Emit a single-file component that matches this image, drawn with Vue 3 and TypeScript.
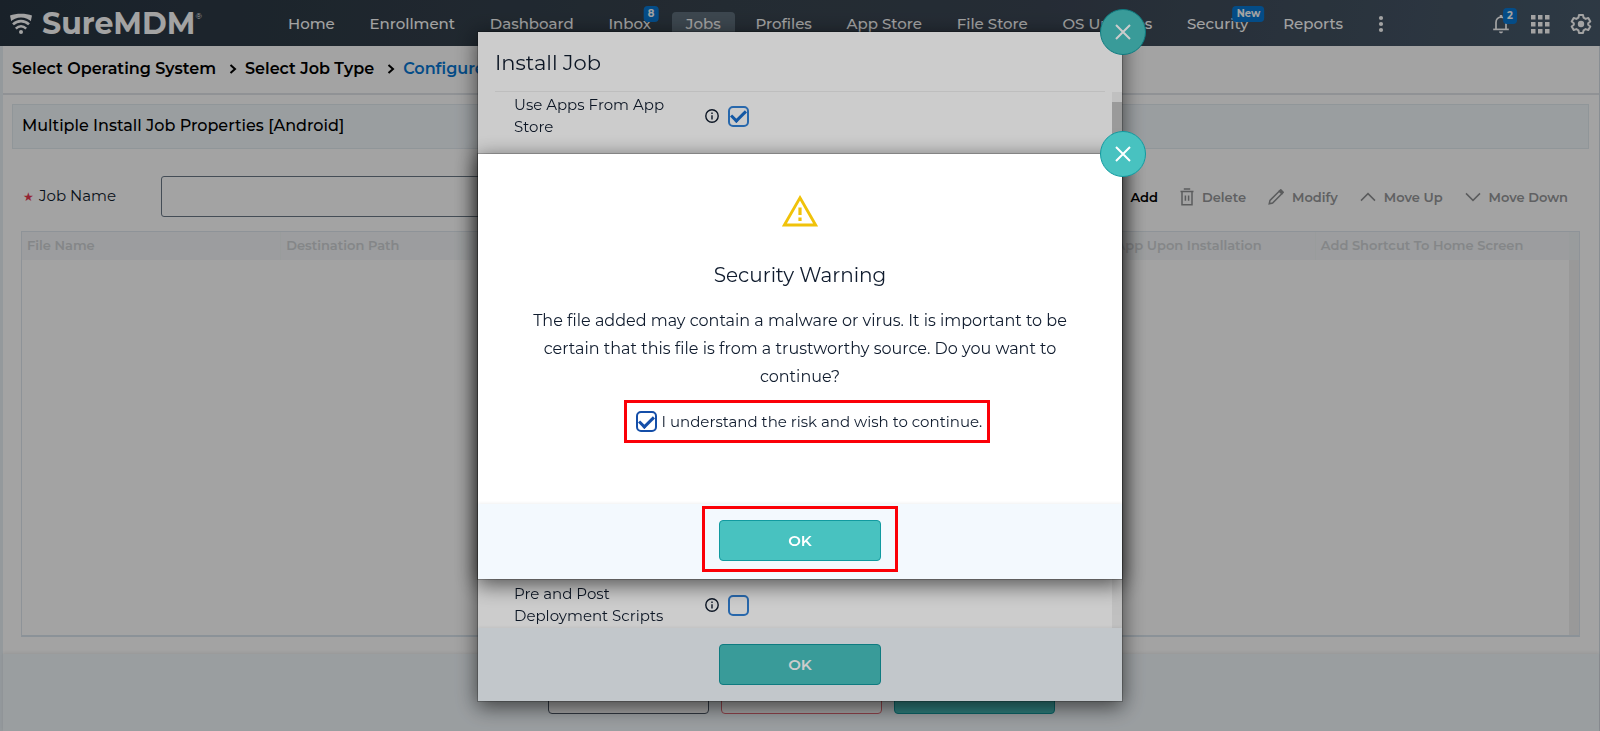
<script setup lang="ts">
import { ref } from 'vue'

interface NavItem {
  label: string
  badge?: string
  active?: boolean
}

const navItems: NavItem[] = [
  { label: 'Home' },
  { label: 'Enrollment' },
  { label: 'Dashboard' },
  { label: 'Inbox', badge: '8' },
  { label: 'Jobs', active: true },
  { label: 'Profiles' },
  { label: 'App Store' },
  { label: 'File Store' },
  { label: 'OS Updates' },
  { label: 'Security', badge: 'New' },
  { label: 'Reports' },
]

const columns: string[] = [
  'File Name',
  'Destination Path',
  '',
  '',
  'Launch App Upon Installation',
  'Add Shortcut To Home Screen',
]

const gridDots: number[] = [1, 8, 15]

const jobName = ref('')
const useAppStore = ref(true)
const deployScripts = ref(false)
const riskAccepted = ref(true)
</script>

<template>
  <div class="page">
    <header class="topbar">
      <a class="brand" href="#">
        <svg class="brand-mark" viewBox="0 0 22 22" aria-hidden="true">
          <path d="M0 2.6C6 0 16 0 22 2.6L20.8 8.2C19.4 6.8 18.2 6.2 17 5.7C13 4.2 9 4.2 5 5.7C3.8 6.2 2.6 6.8 1.2 8.2Z" fill="#fff" />
          <path d="M3 11.4C7.6 7 14.4 7 19 11.4" fill="none" stroke="#fff" stroke-width="2.6" />
          <path d="M5.8 15.6C9 12.4 13 12.4 16.2 15.6" fill="none" stroke="#fff" stroke-width="2.4" />
          <circle cx="11" cy="18.9" r="2" fill="#fff" />
        </svg>
        <span class="brand-name">SureMDM</span><sup class="brand-reg">®</sup>
      </a>
      <nav class="nav">
        <a
          v-for="item in navItems"
          :key="item.label"
          href="#"
          class="nav-link"
          :class="{ active: item.active }"
        >
          {{ item.label }}
          <span v-if="item.badge" class="badge">{{ item.badge }}</span>
        </a>
        <button class="icon-btn" type="button" aria-label="More">
          <svg width="6" height="18" viewBox="0 0 6 18">
            <circle cx="3" cy="3" r="2.1" /><circle cx="3" cy="9" r="2.1" /><circle cx="3" cy="15" r="2.1" />
          </svg>
        </button>
      </nav>
      <div class="tools">
        <button class="icon-btn" type="button" aria-label="Notifications">
          <svg width="18" height="20" viewBox="0 0 18 20">
            <path d="M4 15V8.6C4 5.4 6.2 3.2 9 3.2S14 5.4 14 8.6V15" fill="none" stroke="#fff" stroke-width="1.7" />
            <path d="M1.2 15.4H16.8" stroke="#fff" stroke-width="1.7" />
            <path d="M7.8 1H10.2V3.4H7.8ZM7 17.4H11C11 18.6 10.2 19.2 9 19.2S7 18.6 7 17.4Z" />
          </svg>
          <span class="badge">2</span>
        </button>
        <button class="icon-btn" type="button" aria-label="Apps">
          <svg width="20" height="20" viewBox="0 0 20 20">
            <template v-for="y in gridDots" :key="y">
              <rect v-for="x in gridDots" :key="x" :x="x" :y="y" width="4.5" height="4.5" />
            </template>
          </svg>
        </button>
        <button class="icon-btn" type="button" aria-label="Settings">
          <svg width="22" height="22" viewBox="0 0 22 22">
            <path
              d="M9 2H13L13.6 4.7L15.6 5.9L18.3 5L20.3 8.5L18.2 10.2V11.8L20.3 13.5L18.3 17L15.6 16.1L13.6 17.3L13 20H9L8.4 17.3L6.4 16.1L3.7 17L1.7 13.5L3.8 11.8V10.2L1.7 8.5L3.7 5L6.4 5.9L8.4 4.7Z"
              fill="none"
              stroke="#fff"
              stroke-width="2"
              stroke-linejoin="round"
            />
            <circle cx="11" cy="11" r="3.2" />
          </svg>
        </button>
      </div>
    </header>

    <main class="content">
      <ol class="crumbs">
        <li><a href="#">Select Operating System</a></li>
        <li>
          <svg class="crumb-sep" viewBox="0 0 8 10"><path d="M1.5 1L6 5L1.5 9" /></svg>
          <a href="#">Select Job Type</a>
        </li>
        <li>
          <svg class="crumb-sep" viewBox="0 0 8 10"><path d="M1.5 1L6 5L1.5 9" /></svg>
          <a href="#" class="current">Configure</a>
        </li>
      </ol>

      <h1 class="section-title">Multiple Install Job Properties [Android]</h1>

      <div class="form-row">
        <label class="field-label" for="job-name"><span class="req">★</span>Job Name</label>
        <input id="job-name" v-model="jobName" class="text-input" type="text" />
        <div class="actions">
          <button class="action enabled" type="button">Add</button>
          <button class="action" type="button" disabled>
            <svg width="14" height="18" viewBox="0 0 14 18">
              <path d="M0.5 3.6H13.5M3.8 1H10.2M2 3.6V16.8H12V3.6M5.4 7.4V12.8M8.6 7.4V12.8" />
            </svg>
            Delete
          </button>
          <button class="action" type="button" disabled>
            <svg width="16" height="16" viewBox="0 0 16 16">
              <path d="M1.2 14.8L2 11.4L11.2 2.2L13.8 4.8L4.6 14L1.2 14.8Z" />
              <path class="solid" d="M11.6 1.8L12.8 0.8L15.2 3.2L14.2 4.4Z" />
            </svg>
            Modify
          </button>
          <button class="action" type="button" disabled>
            <svg width="16" height="10" viewBox="0 0 16 10"><path d="M1 8.6L8 1.6L15 8.6" /></svg>
            Move Up
          </button>
          <button class="action" type="button" disabled>
            <svg width="16" height="10" viewBox="0 0 16 10"><path d="M1 1.4L8 8.4L15 1.4" /></svg>
            Move Down
          </button>
        </div>
      </div>

      <div class="table-box">
        <table class="files">
          <thead>
            <tr>
              <th v-for="(col, i) in columns" :key="i" scope="col">{{ col }}</th>
            </tr>
          </thead>
        </table>
        <div class="table-track"></div>
      </div>

      <footer class="page-footer">
        <button class="footer-btn plain" type="button" aria-label="Back"></button>
        <button class="footer-btn danger" type="button" aria-label="Cancel"></button>
        <button class="footer-btn primary" type="button" aria-label="Save"></button>
      </footer>
    </main>
  </div>

  <div class="backdrop install-layer">
    <section class="modal" role="dialog" aria-label="Install Job">
      <button class="close" type="button" aria-label="Close">
        <svg width="16" height="16" viewBox="0 0 16 16"><path d="M1 1L15 15M15 1L1 15" /></svg>
      </button>
      <h2 class="modal-title">Install Job</h2>
      <div class="install-scroll">
        <div class="install-body">
          <div class="option">
            <label for="use-apps">Use Apps From App Store</label>
            <svg class="info" viewBox="0 0 14 14">
              <circle cx="7" cy="7" r="6.2" /><path d="M7 6.2V10.4M7 3.6V5" />
            </svg>
            <input id="use-apps" v-model="useAppStore" class="tick" type="checkbox" />
          </div>
          <div class="option">
            <label for="scripts">Pre and Post Deployment Scripts</label>
            <svg class="info" viewBox="0 0 14 14">
              <circle cx="7" cy="7" r="6.2" /><path d="M7 6.2V10.4M7 3.6V5" />
            </svg>
            <input id="scripts" v-model="deployScripts" class="tick" type="checkbox" />
          </div>
        </div>
        <div class="scroll-track"><div class="scroll-thumb"></div></div>
      </div>
      <div class="modal-footer">
        <button class="ok" type="button">OK</button>
      </div>
    </section>
  </div>

  <div class="backdrop warning-layer">
    <section class="modal" role="alertdialog" aria-labelledby="warning-title">
      <button class="close" type="button" aria-label="Close">
        <svg width="16" height="16" viewBox="0 0 16 16"><path d="M1 1L15 15M15 1L1 15" /></svg>
      </button>
      <div class="warning-body">
        <svg class="warning-icon" viewBox="0 0 36 32" aria-hidden="true">
          <path d="M18 2.8L33.6 30H2.4Z" fill="none" stroke="#f0c20a" stroke-width="2.8" />
          <path d="M18 12.6V20M18 22.6V26" stroke="#f0c20a" stroke-width="3.2" />
        </svg>
        <h2 id="warning-title" class="warning-title">Security Warning</h2>
        <p class="warning-text">
          The file added may contain a malware or virus. It is important to be<br />
          certain that this file is from a trustworthy source. Do you want to<br />
          continue?
        </p>
        <div class="mark consent">
          <input id="risk" v-model="riskAccepted" class="tick" type="checkbox" />
          <label for="risk">I understand the risk and wish to continue.</label>
        </div>
      </div>
      <div class="modal-footer marked">
        <div class="mark ok-mark">
          <button class="ok" type="button">OK</button>
        </div>
      </div>
    </section>
  </div>
</template>

<style>
body {
  margin: 0;
  overflow: hidden;
}
#app {
  font-family: Montserrat, Inter, 'Open Sans', sans-serif;
  color: #101c2e;
}
</style>

<style scoped>
* {
  box-sizing: border-box;
}
button,
input {
  font: inherit;
  color: inherit;
  margin: 0;
}
button {
  background: none;
  border: 0;
  padding: 0;
}
a {
  color: inherit;
  text-decoration: none;
}
.page {
  display: flex;
  flex-direction: column;
  min-height: 100vh;
}
.topbar {
  display: flex;
  align-items: center;
  height: 46px;
  padding: 2px 8px 0 10px;
  background: linear-gradient(100deg, #283542 0%, #38444f 45%, #3b4654 65%, #495b6c 100%);
  color: #fff;
}
.brand {
  display: flex;
  align-items: center;
  width: 278px;
  flex-shrink: 0;
}
.brand-mark {
  width: 22px;
  height: 22px;
  margin-right: 10px;
}
.brand-name {
  font-size: 30px;
  line-height: 44px;
  font-weight: 700;
}
.brand-reg {
  font-size: 8px;
  line-height: 8px;
  align-self: flex-start;
  margin-top: 10px;
}
.nav {
  display: flex;
  flex: 1;
  justify-content: space-between;
  align-items: center;
  margin-right: 108px;
}
.nav-link {
  position: relative;
  font-size: 15px;
  line-height: 24px;
  font-weight: 500;
  white-space: nowrap;
}
.nav-link.active {
  background: #5f6f7c;
  border-radius: 4px;
  padding: 0 14px;
  margin: 0 -14px;
}
.badge {
  position: absolute;
  left: 100%;
  top: -6px;
  transform: translateX(-50%);
  padding: 0 4px;
  border-radius: 4px;
  background: #0878d4;
  font-size: 10px;
  line-height: 16px;
  font-weight: 700;
}
.icon-btn {
  position: relative;
  display: flex;
  fill: #fff;
}
.tools {
  display: flex;
  align-items: center;
  gap: 20px;
}
.content {
  display: flex;
  flex-direction: column;
  flex: 1;
  border-left: 3px solid #e8f0f5;
  border-right: 1px solid #d8dfe6;
}
.crumbs {
  display: flex;
  align-items: center;
  height: 49px;
  margin: 0;
  padding: 0 9px 2px;
  list-style: none;
  border-bottom: 2px solid #e1e5ea;
  font-size: 16px;
  font-weight: 600;
  color: #000;
}
.crumbs li {
  display: flex;
  align-items: center;
}
.crumb-sep {
  width: 8px;
  height: 10px;
  margin: 0 8px 0 13px;
  fill: none;
  stroke: #000;
  stroke-width: 2;
}
.current {
  color: #0878d4;
}
.section-title {
  margin: 9px 10px 0 9px;
  padding: 0 9px 2px;
  border: 1px solid #e3ebf1;
  background: #f2f8fc;
  font-size: 16px;
  line-height: 41px;
  font-weight: 500;
  color: #000;
}
.form-row {
  display: flex;
  align-items: center;
  margin: 27px 28px 14px 20px;
}
.field-label {
  width: 138px;
  font-size: 15px;
  line-height: 20px;
}
.req {
  display: inline-block;
  width: 16px;
  color: #e8384f;
  font: 12px/20px 'DejaVu Sans', sans-serif;
}
.text-input {
  width: 420px;
  height: 41px;
  padding: 0 10px;
  border: 1px solid #6b7a88;
  border-radius: 3px;
  background: transparent;
}
.actions {
  display: flex;
  align-items: center;
  gap: 22px;
  margin-left: auto;
  padding-right: 3px;
}
.action {
  display: flex;
  align-items: center;
  gap: 8px;
  font-size: 13px;
  line-height: 20px;
  font-weight: 600;
  color: #96989a;
}
.action.enabled {
  color: #000;
}
.action svg {
  fill: none;
  stroke: #8f9193;
  stroke-width: 1.5;
}
.action .solid {
  fill: #8f9193;
}
.table-box {
  display: flex;
  flex-direction: column;
  flex: 1;
  margin: 0 19px 0 18px;
  border: 1px solid #dfe7ee;
  border-bottom: 2px solid #dae5ee;
}
.files {
  width: 100%;
  table-layout: fixed;
  border-collapse: collapse;
  background: #f4f7f9;
  border-right: 10px solid #f1f4f7;
}
.files th {
  height: 28px;
  padding: 0 5px 2px;
  border-right: 1px solid #f0f4f6;
  font-size: 13px;
  line-height: 18px;
  font-weight: 600;
  text-align: left;
  white-space: nowrap;
  color: #d0d3d6;
}
.table-track {
  flex: 1;
  align-self: flex-end;
  width: 10px;
  background: #f0f0f0;
}
.page-footer {
  display: flex;
  justify-content: center;
  gap: 12px;
  margin-top: 17px;
  padding: 19px 0 17px;
  background: #f2f8fc;
  box-shadow: 0 -1px 3px rgba(0, 0, 0, 0.08);
}
.footer-btn {
  width: 161px;
  height: 41px;
  border: 1px solid #4a5665;
  border-radius: 4px;
  background: #fff;
}
.footer-btn.danger {
  border-color: #e06a75;
}
.footer-btn.primary {
  border-color: #129aa0;
  background: #48c2c0;
}
.backdrop {
  position: fixed;
  inset: 0;
  display: flex;
  justify-content: center;
  align-items: flex-start;
  background: rgba(0, 0, 0, 0.2);
}
.install-layer {
  padding-top: 31px;
}
.warning-layer {
  padding-top: 153px;
}
.modal {
  position: relative;
  display: flex;
  flex-direction: column;
  width: 100%;
  max-width: 646px;
  border: 1px solid rgba(0, 0, 0, 0.2);
  background: #fff;
  background-clip: padding-box;
  box-shadow: 0 5px 20px rgba(0, 0, 0, 0.6);
}
.close {
  position: absolute;
  top: -23px;
  right: -24px;
  z-index: 1;
  display: flex;
  align-items: center;
  justify-content: center;
  width: 46px;
  height: 46px;
  border: 1px solid #129aa0;
  border-radius: 50%;
  background: #48c2c0;
}
.close svg {
  stroke: #fff;
  stroke-width: 2;
}
.modal-title {
  margin: 0 17px;
  padding-top: 2px;
  border-bottom: 1px solid #eeeeee;
  font-size: 21px;
  line-height: 57px;
  font-weight: 400;
}
.install-scroll {
  display: flex;
  height: calc(100vh - 195px);
}
.install-body {
  display: flex;
  flex-direction: column;
  justify-content: space-between;
  flex: 1;
  padding: 2px 35px 1px 36px;
}
.option {
  display: flex;
  align-items: center;
  font-size: 15px;
  line-height: 22px;
}
.option label {
  width: 170px;
}
.info {
  width: 14px;
  height: 14px;
  margin: 0 9px 0 21px;
  fill: none;
  stroke: #101c2e;
  stroke-width: 1.4;
}
.tick {
  appearance: none;
  display: flex;
  align-items: center;
  justify-content: center;
  width: 21px;
  height: 21px;
  flex-shrink: 0;
  border: 2px solid #3382d8;
  border-radius: 5px;
  background: transparent;
}
.tick:checked::after {
  content: '';
  width: 12px;
  height: 6px;
  margin-top: -3px;
  border: solid #1a6fce;
  border-width: 0 0 3px 3px;
  transform: rotate(-45deg);
}
.scroll-track {
  width: 10px;
  padding-top: 10px;
  background: #f0f0f0;
}
.scroll-thumb {
  height: 160px;
  background: #c1c1c1;
}
.modal-footer {
  display: flex;
  align-items: center;
  justify-content: center;
  height: 73px;
  background: #f3f9fe;
  box-shadow: 0 -1px 3px rgba(0, 0, 0, 0.06);
}
.modal-footer.marked {
  height: 75px;
  padding-bottom: 5px;
}
.ok {
  width: 162px;
  height: 41px;
  border: 1px solid #129aa0;
  border-radius: 4px;
  background: #48c2c0;
  font-size: 15px;
  font-weight: 600;
  color: #fff;
}
.warning-body {
  display: flex;
  flex-direction: column;
  align-items: center;
  padding: 41px 36px 61px;
}
.warning-icon {
  width: 36px;
  height: 32px;
}
.warning-title {
  margin: 34px 0 18px;
  font-size: 20px;
  line-height: 28px;
  font-weight: 400;
}
.warning-text {
  margin: 0;
  font-size: 16px;
  line-height: 28px;
  text-align: center;
  white-space: nowrap;
}
.mark {
  display: flex;
  align-items: center;
  border: 3px solid #fb0007;
}
.consent {
  gap: 5px;
  width: 366px;
  height: 43px;
  margin: 9px 0 0 13px;
  padding-left: 9px;
  font-size: 15px;
  line-height: 20px;
  white-space: nowrap;
}
.consent .tick,
.consent .tick::after {
  border-color: #144ea8;
}
.ok-mark {
  justify-content: center;
  width: 196px;
  height: 66px;
  padding-top: 3px;
}
</style>
